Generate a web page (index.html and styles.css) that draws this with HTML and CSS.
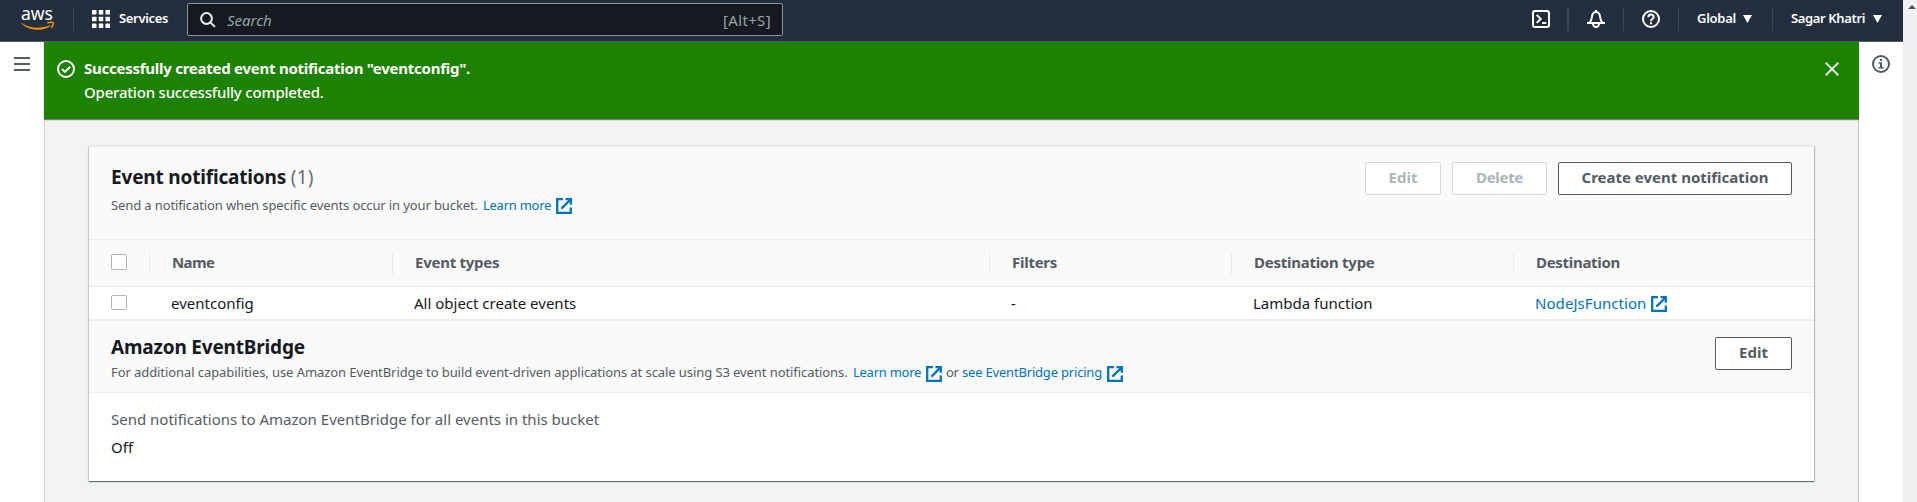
FILE: index.html
```
<!DOCTYPE html>
<html lang="en">
<head>
<meta charset="utf-8">
<title>Event notifications</title>
<link rel="stylesheet" href="styles.css">
</head>
<body>
<svg class="defs" width="0" height="0" aria-hidden="true">
  <symbol id="external" viewBox="0 0 16 16"><path d="M7 1.2H1.2v13.6h13.6V9.5M9.5 1.2h5.3v5.6M14.3 1.7L5.4 10.6" fill="none" stroke="currentColor" stroke-width="2.3"/></symbol>
</svg>
<div class="window">
  <div class="app">
    <header class="topbar">
      <svg class="logo" viewBox="0 0 36 31">
        <text x="1" y="19.500" class="logo-text" textLength="32" lengthAdjust="spacingAndGlyphs">aws</text>
        <path d="M.5 22.500C10 29 21 29 31.500 24.700C25 31.800 8.500 31.500.5 22.500z" fill="#f90"/>
        <path d="M27.300 23.200c2-1.200 5.300-1.200 5.900-.5.500.7-.2 3.600-2.100 5.300" fill="none" stroke="#f90" stroke-width="1.400"/>
      </svg>
      <span class="rule rule-logo"></span>
      <svg class="grid-icon" viewBox="0 0 18 18" fill="#fff"><rect width="4.500" height="4.500" rx=".6"/><rect x="6.750" width="4.500" height="4.500" rx=".6"/><rect x="13.500" width="4.500" height="4.500" rx=".6"/><rect y="6.750" width="4.500" height="4.500" rx=".6"/><rect x="6.750" y="6.750" width="4.500" height="4.500" rx=".6"/><rect x="13.500" y="6.750" width="4.500" height="4.500" rx=".6"/><rect y="13.500" width="4.500" height="4.500" rx=".6"/><rect x="6.750" y="13.500" width="4.500" height="4.500" rx=".6"/><rect x="13.500" y="13.500" width="4.500" height="4.500" rx=".6"/></svg>
      <span class="nav-label services">Services</span>
      <div class="search">
        <svg width="16" height="16" viewBox="0 0 16 16" fill="none" stroke="#eaeded" stroke-width="2"><circle cx="6.500" cy="6.500" r="5.400"/><path d="M10.400 10.400l4.500 4.500"/></svg>
        <span class="placeholder">Search</span>
        <span class="shortcut">[Alt+S]</span>
      </div>
      <div class="tools">
        <svg class="tool shell" viewBox="0 0 18 18" fill="none" stroke="#fff" stroke-width="2"><rect x="1" y="1" width="16" height="16" rx="2"/><path d="M4.700 4.900l4 4-4 4M10 13h4.300"/></svg>
        <span class="rule thick"></span>
        <svg class="tool" viewBox="0 0 18 18" fill="none" stroke="#fff" stroke-width="2"><path d="M9 0v2M0 13h18M2.500 12.500C5 10 4.500 8.500 5 6c.5-2.500 2-4 4-4s3.500 1.500 4 4c.5 2.500 0 4 2.500 6.500M6 13c0 5.300 6 5.300 6 0"/></svg>
        <span class="rule"></span>
        <svg class="tool" viewBox="0 0 18 18" fill="none" stroke="#fff" stroke-width="2"><circle cx="9" cy="9" r="8"/><path d="M6.300 7.200c0-3.500 5.400-3.300 5.400-.3 0 1.900-2.700 1.900-2.700 4.300M9 12.300v2"/></svg>
        <span class="rule"></span>
        <span class="nav-label global">Global</span><span class="caret"></span>
        <span class="rule"></span>
        <span class="nav-label user">Sagar Khatri</span><span class="caret"></span>
      </div>
    </header>
    <div class="body">
      <aside class="rail rail-left"><svg width="16" height="14" viewBox="0 0 16 14" fill="#545b64"><path d="M0 0h16v2H0zM0 6h16v2H0zM0 12h16v2H0z"/></svg></aside>
      <main class="content">
        <section class="flash">
          <svg width="18" height="18" viewBox="0 0 18 18" fill="none" stroke="#fff" stroke-width="2"><circle cx="9" cy="9" r="8"/><path d="M4.900 9l3 2.900 5.200-5.200"/></svg>
          <div class="flash-text">
            <div class="flash-title">Successfully created event notification "eventconfig".</div>
            <div class="flash-body">Operation successfully completed.</div>
          </div>
          <svg class="close" width="14" height="14" viewBox="0 0 14 14" fill="none" stroke="#dfeedd" stroke-width="2"><path d="M.7.700l12.600 12.600M13.300.700L.7 13.300"/></svg>
        </section>
        <section class="panel">
          <div class="panel-head">
            <div>
              <h2>Event notifications <span class="count">(1)</span></h2>
              <p class="desc"><span class="d1">Send a notification when specific events occur in your bucket.</span> <a class="more">Learn more</a><svg class="ext"><use href="#external"/></svg></p>
            </div>
            <div class="actions">
              <button class="disabled b-edit">Edit</button>
              <button class="disabled b-delete">Delete</button>
              <button class="b-create">Create event notification</button>
            </div>
          </div>
          <div class="row head">
            <div class="check"><span class="box"></span></div>
            <div class="cell name">Name</div>
            <div class="cell">Event types</div>
            <div class="cell">Filters</div>
            <div class="cell">Destination type</div>
            <div class="cell dest">Destination</div>
          </div>
          <div class="row data">
            <div class="check"><span class="box"></span></div>
            <div class="cell">eventconfig</div>
            <div class="cell">All object create events</div>
            <div class="cell">-</div>
            <div class="cell">Lambda function</div>
            <div class="cell"><a>NodeJsFunction</a><svg class="ext"><use href="#external"/></svg></div>
          </div>
          <div class="bridge-head">
            <div>
              <h2>Amazon EventBridge</h2>
              <p class="desc"><span class="d2">For additional capabilities, use Amazon EventBridge to build event-driven applications at scale using S3 event notifications.</span> <a class="more">Learn more</a><svg class="ext"><use href="#external"/></svg> <span class="or">or</span> <a class="pricing">see EventBridge pricing</a><svg class="ext"><use href="#external"/></svg></p>
            </div>
            <button class="b-bridge">Edit</button>
          </div>
          <div class="bridge-body">
            <div class="label">Send notifications to Amazon EventBridge for all events in this bucket</div>
            <div class="value">Off</div>
          </div>
        </section>
      </main>
      <aside class="rail rail-right"><svg width="18" height="18" viewBox="0 0 18 18"><circle cx="9" cy="9" r="8" fill="none" stroke="#545b64" stroke-width="2"/><path d="M8 4h2v2H8zM6.500 7.300H10v4.700h1.500v1.500h-5V12H8V8.800H6.500z" fill="#545b64"/></svg></aside>
    </div>
  </div>
  <div class="scrollbar"><span class="up"></span></div>
</div>
</body>
</html>
```
FILE: styles.css
```
* { box-sizing: border-box; }
body { margin: 0; font-family: "Noto Sans", "Open Sans", sans-serif; font-size: 15px; color: #16191f; overflow: hidden; }
svg { display: block; flex: none; }
.defs { position: absolute; }
h2, p { margin: 0; }
a { color: #0073bb; }
.window { display: flex; height: 502px; }
.app { flex: 1; display: flex; flex-direction: column; min-width: 0; }
.scrollbar { width: 14px; background: #f0f0f0; display: flex; justify-content: flex-end; padding: 5px 1px 0 0; }
.up { width: 0; height: 0; border: 4px solid transparent; border-top: 0; border-bottom: 4px solid #505050; }

/* Top navigation */
.topbar { height: 42px; flex: none; background: #232f3e; border-bottom: 1px solid #545b64; display: flex; align-items: flex-start; padding: 0 21px 0 20px; color: #fff; }
.logo { width: 36px; height: 31px; overflow: visible; }
.logo-text { font: 400 18.500px "Noto Sans", sans-serif; fill: #fff; }
.rule { width: 1px; height: 24px; margin-top: 7px; background: #414750; flex: none; }
.rule-logo { margin-left: 17px; }
.rule.thick { width: 2px; }
.grid-icon { width: 18px; height: 18px; margin: 10px 0 0 18px; }
.nav-label { font-size: 13px; font-weight: 600; line-height: 20px; margin-top: 8px; white-space: nowrap; }
.services { width: 49px; margin-left: 9px; letter-spacing: -.34px; }
.search { width: 596px; height: 33px; margin: 3px 0 0 19px; border: 1px solid #879596; border-radius: 2px; background: #16191f; display: flex; align-items: center; padding: 0 11px 0 12px; color: #95a5a6; }
.placeholder { font-style: italic; margin-left: 11px; }
.shortcut { margin-left: auto; letter-spacing: .35px; }
.tools { margin-left: auto; display: flex; align-items: flex-start; }
.tool { width: 18px; height: 18px; margin: 10px 18px 0; }
.shell { margin-right: 17px; }
.global { margin-left: 18px; width: 41px; letter-spacing: -.26px; }
.user { margin-left: 18px; width: 77px; letter-spacing: -.37px; }
.caret { width: 9px; height: 8px; margin: 15px 0 0 5px; background: #fff; clip-path: polygon(0 0, 100% 0, 50% 100%); }
.caret + .rule { margin-left: 20px; }

/* Page body */
.body { flex: 1; display: flex; min-height: 0; }
.rail { width: 44px; background: #fff; }
.rail-left { padding: 15px 0 0 14px; }
.rail-right { padding: 13px 0 0 13px; }
.content { flex: 1; min-width: 0; background: #f2f3f3; box-shadow: inset 1px 0 #d0d4d4, inset -1px 0 #bcc2c4; }
.flash { height: 77px; background: #1d8102; box-shadow: 0 1px 1px #6f7f78; color: #fff; display: flex; align-items: flex-start; padding: 18px 20px 0 13px; }
.flash-text { margin-left: 9px; margin-top: -4px; line-height: 24px; }
.flash-title { font-weight: 700; letter-spacing: -.252px; }
.flash-body { font-weight: 500; letter-spacing: -.2px; }
.close { margin: 2px 0 0 auto; }

/* Panel */
.panel { margin: 27px 45px 0; height: 335px; background: #fff; border-top: 1px solid #eaeded; box-shadow: 0 1px 1px #687078, 1px 0 1px #c5cacc, -1px 0 1px #d5dbdb; }
.panel-head { height: 92px; background: #fafafa; display: flex; justify-content: space-between; padding: 15px 22px 0; }
.panel-head .desc { margin-top: 3px; }
h2 { font-size: 19px; line-height: 30px; letter-spacing: -.18px; font-weight: 700; }
.count { font-weight: 400; color: #687078; letter-spacing: .2px; }
.desc { display: flex; font-size: 13px; line-height: 20px; color: #545b64; white-space: pre; }
.d1 { width: 372px; letter-spacing: -.115px; }
.d2 { width: 742px; letter-spacing: -.08px; }
.more { width: 68px; letter-spacing: -.26px; }
.pricing { width: 140px; letter-spacing: -.19px; margin-left: 4px; }
.or { margin-left: 4px; width: 12px; letter-spacing: -.3px; }
.ext { width: 16px; height: 16px; margin: 3px 0 0 5px; color: #0073bb; }
.actions { display: flex; gap: 11px; }
button { font: 700 15px/20px "Noto Sans", sans-serif; height: 33px; padding: 0 0 3px; color: #545b64; background: #fff; border: 1px solid #545b64; border-radius: 2px; white-space: nowrap; }
.disabled { color: #aab7b8; border-color: #d5dbdb; }
.b-edit { width: 76px; }
.b-delete { width: 95px; letter-spacing: -.3px; }
.b-create { width: 234px; }
.b-bridge { width: 77px; }
.row { display: grid; grid-template-columns: 60px 243px 597px 242px 282px 1fr; }
.head { height: 48px; border-top: 1px solid #eaeded; border-bottom: 1px solid #eaeded; background: #fafafa; color: #545b64; font-weight: 700; letter-spacing: -.26px; }
.head .cell { height: 23px; margin-top: 12px; padding-left: 22px; border-left: 1px solid #eaeded; line-height: 21px; }
.head .name { letter-spacing: -.6px; }
.head .dest { letter-spacing: -.3px; }
.check { padding: 14px 0 0 22px; }
.box { display: block; width: 16px; height: 16px; border: 1px solid #aab7b8; border-radius: 2px; background: #fff; }
.data { height: 34px; border-bottom: 2px solid #eaeded; }
.data .check { padding-top: 8px; }
.data .box { height: 15px; }
.data .cell { display: flex; padding: 4px 0 0 22px; line-height: 24px; }
.data a { letter-spacing: .06px; }
.data .ext { margin-top: 5px; }
.bridge-head { height: 72px; background: #fafafa; border-bottom: 1px solid #eaeded; display: flex; justify-content: space-between; padding: 11px 22px 0; }
.bridge-head .ext { margin-top: 4px; }
.bridge-head .b-bridge { margin-top: 5px; }
.bridge-body { padding: 14px 22px; line-height: 24px; }
.label { color: #545b64; }
.value { margin-top: 4px; }
```
